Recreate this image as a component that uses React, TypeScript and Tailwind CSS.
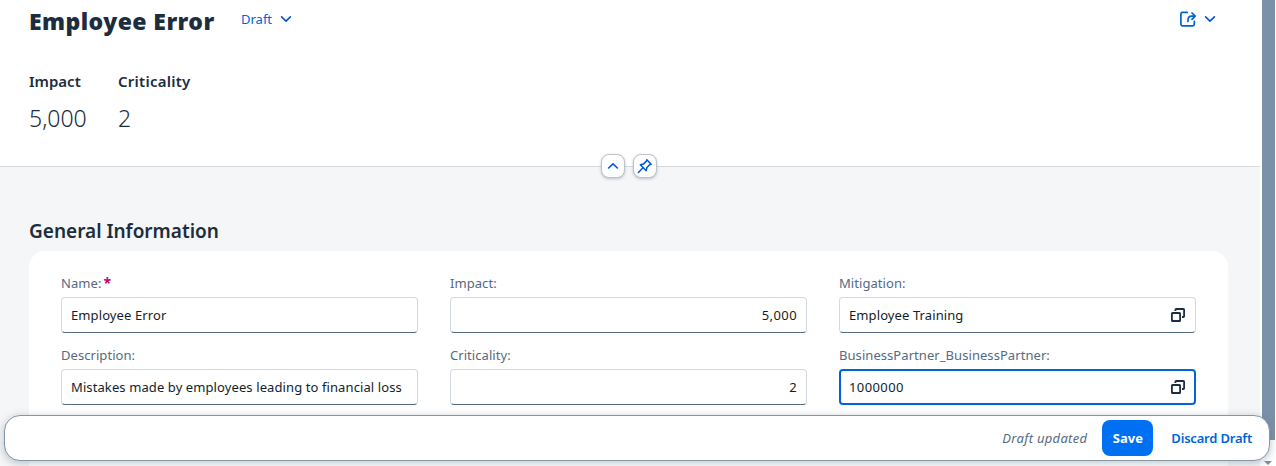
import React from "react";

function Chevron({ up = false }: { up?: boolean }) {
  return (
    <svg width="12" height="8" viewBox="0 0 12 8" fill="none" stroke="#0057d2" strokeWidth="1.6" strokeLinecap="round" strokeLinejoin="round">
      <path d={up ? "M1.6 6 6 1.9 10.4 6" : "M1.6 1.9 6 6.1 10.4 1.9"} />
    </svg>
  );
}

function ShareIcon() {
  return (
    <svg width="16" height="16" viewBox="0 0 16 16" fill="none" stroke="#0064d9" strokeWidth="1.7" strokeLinecap="round" strokeLinejoin="round">
      <path d="M7.2 1.4H2.4Q.9 1.4.9 3v10.2q0 1.6 1.5 1.6h10.4q1.5 0 1.5-1.6v-2.9" />
      <path d="M8 10.5V9q0-3.8 3.6-3.8h3.6M12 2l3.2 3.2L12 8.4" />
    </svg>
  );
}

function PinIcon() {
  return (
    <svg width="16" height="16" viewBox="0 0 16 16" fill="none" stroke="#0057d2" strokeWidth="1.5" strokeLinecap="round" strokeLinejoin="round">
      <path d="M9.8 1.8 14.2 6.2 12.6 6.8 9.9 9.5 9.2 12.7 3.3 6.8 6.5 6.1 9.2 3.4Z" />
      <path d="M6 9.8 1.4 14.5" />
    </svg>
  );
}

function ValueHelpIcon() {
  return (
    <svg width="16" height="16" viewBox="0 0 16 16" fill="none" stroke="#1d2d3e" strokeWidth="1.8" strokeLinejoin="round">
      <rect x="1.9" y="6" width="8.2" height="8" rx="0.6" />
      <path d="M5.4 4V2.8q0-.8.8-.8h7.1q.8 0 .8.8v6.4q0 .8-.8.8H12" />
    </svg>
  );
}

type FieldProps = {
  label: string;
  value: string;
  required?: boolean;
  numeric?: boolean;
  help?: boolean;
  focused?: boolean;
};

function Field({ label, value, required, numeric, help, focused }: FieldProps) {
  return (
    <div className="flex h-[72px] flex-col">
      <div className="flex h-[26px] items-start gap-0.5 pt-0.5 text-[13px] leading-5 tracking-[0.06px] text-[#556b82]">
        <span>{label}</span>
        {required && <span className="text-sm leading-5 font-bold text-[#ba066c]">*</span>}
      </div>
      <div
        className={
          "flex h-9 items-center rounded bg-white text-[13px] tracking-[0.1px] text-[#131e29] " +
          (focused ? "border-2 border-[#0064d9] px-2 " : "border border-[#d3d9e0] border-b-[#556b81] px-[9px] ") +
          (numeric ? "justify-end" : "justify-between")
        }
      >
        <span className={"pt-0.5 whitespace-nowrap " + (numeric || focused ? "tracking-[0.4px]" : "")}>{value}</span>
        {help && <ValueHelpIcon />}
      </div>
    </div>
  );
}

export default function App() {
  return (
    <div className="relative flex h-[466px] w-[1276px] overflow-hidden bg-white font-['Noto_Sans',sans-serif] text-[#1d2d3e]">
      <main className="flex w-[1260px] shrink-0 flex-col bg-[#f5f6f7]">
        <header className="relative h-[167px] shrink-0 border-b border-[#d5d9dd] bg-white pl-[29px] pr-11">
          <div className="flex h-[42px] items-center">
            <h1 className="w-[212px] whitespace-nowrap text-[23px] font-black tracking-[0.43px]">Employee Error</h1>
            <button className="mb-1 flex items-center gap-2 text-[13px] text-[#0064d9]">
              <span className="w-[31px] pt-0.5">Draft</span>
              <Chevron />
            </button>
            <button className="mb-1 ml-auto flex items-center gap-2">
              <ShareIcon />
              <Chevron />
            </button>
          </div>
          <div className="flex pt-7">
            <div className="w-[89px]">
              <div className="text-[15px] leading-[22px] font-semibold">Impact</div>
              <div className="mt-[10px] text-[23px] leading-[32px] font-light">5,000</div>
            </div>
            <div>
              <div className="text-[15px] leading-[22px] font-semibold tracking-[0.25px]">Criticality</div>
              <div className="mt-[10px] text-[23px] leading-[32px] font-light">2</div>
            </div>
          </div>
          <div className="absolute top-[154px] left-[601px] flex gap-2">
            <button className="flex size-6 items-center justify-center rounded-lg border border-[#bcc3ca] bg-white shadow-[0_1px_3px_#556b8260]">
              <Chevron up />
            </button>
            <button className="flex size-6 items-center justify-center rounded-lg border border-[#bcc3ca] bg-white shadow-[0_1px_3px_#556b8260]">
              <PinIcon />
            </button>
          </div>
        </header>
        <section className="flex grow flex-col px-[29px] pt-[49px]">
          <h2 className="h-[35px] text-[19px] leading-[30px] font-semibold">General Information</h2>
          <div className="grid w-[1199px] grow grid-cols-3 content-start gap-x-8 rounded-t-2xl bg-white px-8 pt-5">
            <Field label="Name:" value="Employee Error" required />
            <Field label="Impact:" value="5,000" numeric />
            <Field label="Mitigation:" value="Employee Training" help />
            <Field label="Description:" value="Mistakes made by employees leading to financial loss" />
            <Field label="Criticality:" value="2" numeric />
            <Field label="BusinessPartner_BusinessPartner:" value="1000000" help focused />
          </div>
        </section>
      </main>
      <div className="flex w-[15px] shrink-0 flex-col items-end bg-white">
        <div className="h-[440px] w-[13px] bg-[#7b91a8]" />
        <svg className="mt-[21px] mr-[3px]" width="8" height="4" viewBox="0 0 8 4" fill="#7b91a8">
          <path d="M0 0h8L4 4Z" />
        </svg>
      </div>
      <footer className="absolute bottom-[5px] left-1 flex h-[46px] w-[1266px] items-center justify-end rounded-2xl border border-[#8796a5] bg-white pr-[17px] text-[13px] shadow-[0_2px_8px_#556b8266]">
        <span className="mr-[15px] pt-0.5 tracking-[0.3px] text-[#556b82] italic">Draft updated</span>
        <button className="mr-[18px] h-9 w-[51px] rounded-lg bg-[#0070f2] pt-0.5 font-bold text-white">Save</button>
        <button className="pt-0.5 font-semibold tracking-[-0.2px] text-[#0064d9]">Discard Draft</button>
      </footer>
    </div>
  );
}
